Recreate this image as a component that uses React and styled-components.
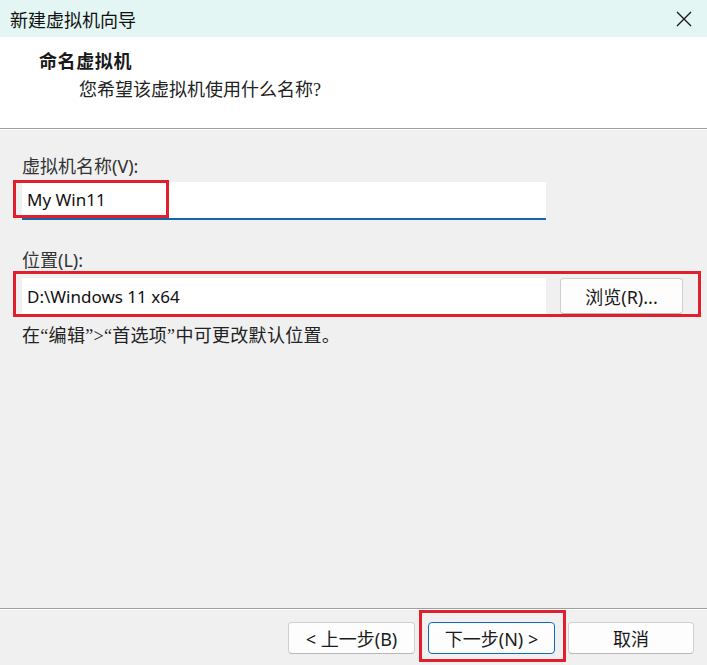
import React from 'react';
import styled, { createGlobalStyle } from 'styled-components';

const GlobalStyle = createGlobalStyle`
  html, body {
    margin: 0;
    padding: 0;
    background: #f0f0f0;
  }
  * {
    box-sizing: border-box;
  }
`;

const sans = `"Noto Sans", "Noto Sans CJK SC", sans-serif`;
const serif = `"Liberation Serif", "Noto Sans CJK SC", serif`;
const red = '#e0202d';

const StyledWindow = styled.div`
  width: 707px;
  height: 665px;
  display: flex;
  flex-direction: column;
  background: #f0f0f0;
  color: #1a1a1a;
  font-family: ${sans};
  overflow: hidden;
`;

const StyledTitleBar = styled.div`
  height: 37px;
  flex-shrink: 0;
  display: flex;
  align-items: center;
  justify-content: space-between;
  background: #e3f6f3;
  padding: 0 15px 0 10px;
  font-size: 18px;
  color: #111;
`;

const StyledClose = styled.svg`
  width: 16px;
  height: 16px;
`;

const StyledHeader = styled.div`
  height: 92px;
  flex-shrink: 0;
  background: #ffffff;
  padding: 13px 0 0 39px;
  border-bottom: 1px solid #a0a0a0;
  box-shadow: 0 1px 0 #ffffff;
  font-family: ${serif};
  font-size: 18px;
  line-height: 24px;
  > h1 {
    margin: 0;
    font-size: 18px;
    font-weight: 700;
    letter-spacing: 0.6px;
  }
  > p {
    margin: 4px 0 0 40px;
    color: #222;
  }
`;

const StyledBody = styled.div`
  flex: 1;
  padding: 25px 22px 0 22px;
  display: flex;
  flex-direction: column;
`;

const StyledLabel = styled.label`
  font-size: 18px;
  line-height: 24px;
  color: #333;
  margin-top: ${({ $top }) => $top || 0}px;
`;

const StyledField = styled.div`
  position: relative;
  margin-top: ${({ $top }) => $top || 0}px;
  display: flex;
  gap: 14px;
`;

const StyledInput = styled.div`
  width: 524px;
  height: ${({ $height }) => $height}px;
  background: #ffffff;
  display: flex;
  align-items: center;
  padding: 0 0 ${({ $focused }) => ($focused ? 2 : 0)}px 5px;
  font-size: 17px;
  color: #111;
  border-bottom: ${({ $focused }) => ($focused ? '2px solid #1565a8' : 'none')};
`;

const StyledButton = styled.button`
  width: ${({ $width }) => $width || 127}px;
  height: ${({ $height }) => $height || 32}px;
  background: #fdfdfd;
  border: 1px solid ${({ $primary }) => ($primary ? '#0f6cbd' : '#d0d0d0')};
  border-bottom-color: ${({ $primary }) => ($primary ? '#0f6cbd' : '#b8b8b8')};
  border-radius: 4px;
  font-family: ${sans};
  font-size: 18px;
  color: #1a1a1a;
  padding: 0;
  display: flex;
  align-items: center;
  justify-content: center;
  position: relative;
`;

const StyledHint = styled.p`
  margin: 10px 0 0 0;
  font-family: ${serif};
  font-size: 18px;
  line-height: 24px;
  letter-spacing: 0.3px;
  color: #222;
`;

const StyledFooter = styled.div`
  height: 57px;
  flex-shrink: 0;
  border-top: 1px solid #a0a0a0;
  box-shadow: inset 0 1px 0 #ffffff;
  display: flex;
  justify-content: flex-end;
  align-items: flex-start;
  gap: 13px;
  padding: 13px 13px 0 0;
`;

const StyledMark = styled.div`
  position: absolute;
  top: ${({ $t }) => $t}px;
  left: ${({ $l }) => $l}px;
  right: ${({ $r }) => ($r === undefined ? 'auto' : `${$r}px`)};
  bottom: ${({ $b }) => $b}px;
  width: ${({ $w }) => ($w ? `${$w}px` : 'auto')};
  border: 3px solid ${red};
  pointer-events: none;
`;

function CloseIcon() {
  return (
    <StyledClose viewBox="0 0 16 16">
      <path d="M1 1 L15 15 M15 1 L1 15" stroke="#1a1a1a" strokeWidth="1.4" fill="none" />
    </StyledClose>
  );
}

export default function App() {
  return (
    <>
      <GlobalStyle />
      <StyledWindow>
        <StyledTitleBar>
          <span>新建虚拟机向导</span>
          <CloseIcon />
        </StyledTitleBar>
        <StyledHeader>
          <h1>命名虚拟机</h1>
          <p>您希望该虚拟机使用什么名称?</p>
        </StyledHeader>
        <StyledBody>
          <StyledLabel>虚拟机名称(V):</StyledLabel>
          <StyledField $top={4}>
            <StyledInput $height={38} $focused>
              My Win11
            </StyledInput>
            <StyledMark $t={-2} $l={-9} $b={2} $w={156} />
          </StyledField>
          <StyledLabel $top={28}>位置(L):</StyledLabel>
          <StyledField $top={6}>
            <StyledInput $height={36}>D:\Windows 11 x64</StyledInput>
            <StyledButton $width={123} $height={36}>
              浏览(R)...
            </StyledButton>
            <StyledMark $t={-7} $l={-9} $r={-16} $b={-3} />
          </StyledField>
          <StyledHint>在“编辑”&gt;“首选项”中可更改默认位置。</StyledHint>
        </StyledBody>
        <StyledFooter>
          <StyledButton>&lt; 上一步(B)</StyledButton>
          <StyledButton $primary>
            下一步(N) &gt;
            <StyledMark $t={-13} $l={-10} $r={-12} $b={-9} />
          </StyledButton>
          <StyledButton $width={126}>取消</StyledButton>
        </StyledFooter>
      </StyledWindow>
    </>
  );
}
